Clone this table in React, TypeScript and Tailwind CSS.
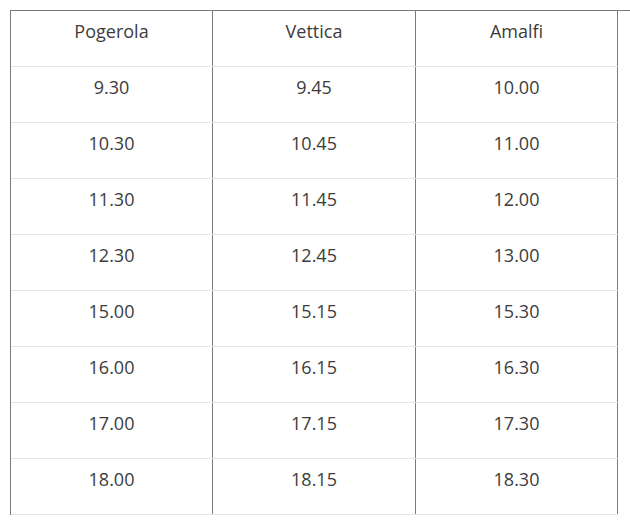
import React from "react";

const header = ["Pogerola", "Vettica", "Amalfi"];
const rows = [
  ["9.30", "9.45", "10.00"],
  ["10.30", "10.45", "11.00"],
  ["11.30", "11.45", "12.00"],
  ["12.30", "12.45", "13.00"],
  ["15.00", "15.15", "15.30"],
  ["16.00", "16.15", "16.30"],
  ["17.00", "17.15", "17.30"],
  ["18.00", "18.15", "18.30"],
];

const widths = ["w-[202px]", "w-[203px]", "w-[202px]"];

function Row({ cells }: { cells: string[] }) {
  return (
    <div className="flex border-b border-[#e6e6e6]">
      {cells.map((c, i) => (
        <div
          key={i}
          className={`${widths[i]} h-[55px] border-r border-[#7a7a7a] pt-[8px] text-center text-[18px] leading-[24px] text-[#3c3c3c]`}
        >
          {c}
        </div>
      ))}
    </div>
  );
}

export default function App() {
  return (
    <div
      className="min-h-[522px] bg-white pl-[10px] pt-[10px]"
      style={{ fontFamily: '"Open Sans", sans-serif' }}
    >
      <div className="border-t border-[#7a7a7a]">
        <div className="w-[608px] border-l border-[#7a7a7a]">
          <Row cells={header} />
          {rows.map((r, i) => (
            <Row key={i} cells={r} />
          ))}
        </div>
      </div>
    </div>
  );
}
